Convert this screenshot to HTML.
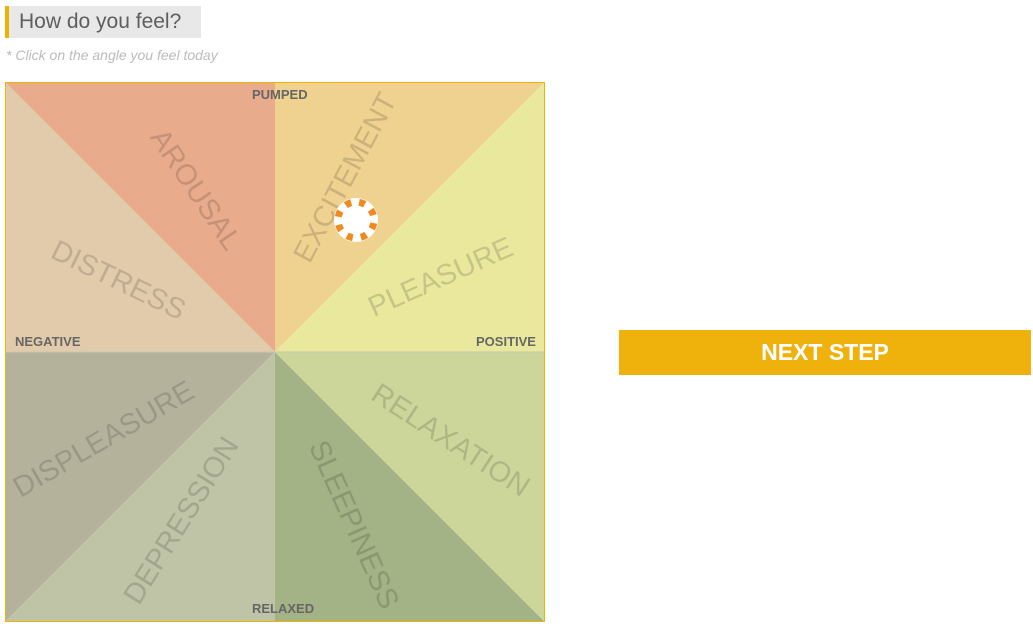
<!DOCTYPE html>
<html><head><style>
body{margin:0;width:1033px;height:631px;background:#fff;font-family:"Liberation Sans",sans-serif;position:relative;overflow:hidden}
.h{position:absolute;left:5px;top:6px;height:32px;width:196px;background:#e8e8e8;border-left:4px solid #f0b000;box-sizing:border-box;font-size:21px;color:#5e5e5e;line-height:32px;padding-left:10px}
.sub{position:absolute;left:6px;top:47px;font-size:14px;font-style:italic;color:#bbb}
.sq{position:absolute;left:5px;top:82px;width:540px;height:540px;box-sizing:border-box;border:1px solid #f0b400}
.lab{position:absolute;font-size:29px;color:rgba(0,0,0,0.15);white-space:nowrap;transform-origin:center}
.ax{position:absolute;font-size:13px;font-weight:bold;color:#666}
.btn{position:absolute;left:619px;top:330px;width:412px;height:45px;background:#efb10c;color:#fff;font-weight:bold;font-size:23px;text-align:center;line-height:45px}
</style></head><body>
<div class="h">How do you feel?</div>
<div class="sub">* Click on the angle you feel today</div>
<svg style="position:absolute;left:5px;top:82px" width="540" height="540">
<polygon points="0,0 270,0 270,270" fill="#e8ab8c"/>
<polygon points="0,0 270,270 0,270" fill="#e2cbab"/>
<polygon points="270,0 540,0 270,270" fill="#efd190"/>
<polygon points="540,0 540,270 270,270" fill="#e9e89d"/>
<polygon points="0,270 270,270 0,540" fill="#b5b29c"/>
<polygon points="270,270 270,540 0,540" fill="#bec4a5"/>
<polygon points="270,270 540,540 270,540" fill="#a3b385"/>
<polygon points="270,270 540,270 540,540" fill="#cdd69a"/>
<line x1="0" y1="270" x2="540" y2="270" stroke="#c8c8b0" stroke-width="1"/>
</svg>
<div class="sq"></div>
<div class="lab" style="left:195px;top:190px;transform:translate(-50%,-50%) rotate(56deg)">AROUSAL</div>
<div class="lab" style="left:118px;top:281px;transform:translate(-50%,-50%) rotate(26deg)">DISTRESS</div>
<div class="lab" style="left:346px;top:178px;transform:translate(-50%,-50%) rotate(-62deg)">EXCITEMENT</div>
<div class="lab" style="left:441px;top:278px;transform:translate(-50%,-50%) rotate(-24deg)">PLEASURE</div>
<div class="lab" style="left:104px;top:440px;transform:translate(-50%,-50%) rotate(-30deg)">DISPLEASURE</div>
<div class="lab" style="left:182px;top:521px;transform:translate(-50%,-50%) rotate(-58deg)">DEPRESSION</div>
<div class="lab" style="left:353px;top:525px;transform:translate(-50%,-50%) rotate(66deg)">SLEEPINESS</div>
<div class="lab" style="left:450px;top:441px;transform:translate(-50%,-50%) rotate(33deg)">RELAXATION</div>
<div class="ax" style="left:252px;top:87px">PUMPED</div>
<div class="ax" style="left:15px;top:334px">NEGATIVE</div>
<div class="ax" style="left:476px;top:334px">POSITIVE</div>
<div class="ax" style="left:252px;top:601px">RELAXED</div>
<svg style="position:absolute;left:333px;top:197px" width="46" height="46"><circle cx="23" cy="23" r="22" fill="#fff"/><circle cx="23" cy="23" r="18" fill="none" stroke="#f08a20" stroke-width="7" stroke-dasharray="6 8.14" transform="rotate(-80 23 23)"/><circle cx="23" cy="23" r="13.5" fill="#fff"/></svg>
<div class="btn">NEXT STEP</div>
</body></html>
